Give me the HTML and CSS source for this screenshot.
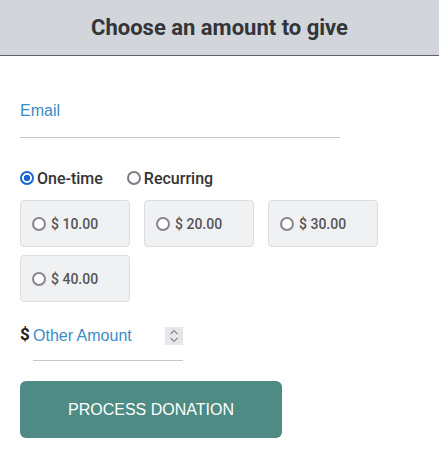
FILE: index.html
```html
<!DOCTYPE html>
<html lang="en">
<head>
    <meta charset="UTF-8">
    <title>Donate</title>
    <link rel="stylesheet" href="styles.css">
</head>
<body>
    <div class="donate-header">
        <h1>Choose an amount to give</h1>
    </div>

    <form class="donate-form">
        <div class="email-field">
            <input type="email" placeholder="Email">
        </div>

        <div class="frequency">
            <label class="freq-item"><input type="radio" name="freq" checked> One-time</label>
            <label class="freq-item"><input type="radio" name="freq"> Recurring</label>
        </div>

        <div class="amounts">
            <label class="amount-box"><input type="radio" name="amount"> $ 10.00</label>
            <label class="amount-box"><input type="radio" name="amount"> $ 20.00</label>
            <label class="amount-box"><input type="radio" name="amount"> $ 30.00</label>
            <label class="amount-box"><input type="radio" name="amount"> $ 40.00</label>
        </div>

        <div class="other-amount">
            <span class="dollar">$</span>
            <div class="other-field">
                <input type="text" placeholder="Other Amount">
                <span class="spinner">
                    <svg width="12" height="16" viewBox="0 0 12 16">
                        <path d="M2.5 6 L6 2.5 L9.5 6" fill="none" stroke="#8a8a92" stroke-width="1.2"/>
                        <path d="M2.5 10 L6 13.5 L9.5 10" fill="none" stroke="#8a8a92" stroke-width="1.2"/>
                    </svg>
                </span>
            </div>
        </div>

        <button type="button" class="donate-btn">PROCESS DONATION</button>
    </form>
</body>
</html>
```

FILE: styles.css
```css
* {
    margin: 0;
    padding: 0;
    box-sizing: border-box;
}

body {
    background: #fff;
    font-family: Roboto, sans-serif;
    color: #333;
}

.donate-header {
    background: #d2d6da;
    height: 56px;
    border-bottom: 1px solid #5f6166;
    display: flex;
    align-items: center;
    justify-content: center;
}

.donate-header h1 {
    font-size: 22px;
    font-weight: 700;
    color: #333539;
}

.donate-form {
    padding: 32px 20px 0 20px;
}

.email-field input {
    width: 320px;
    height: 50px;
    border: none;
    border-bottom: 1px solid #c8c8c8;
    padding: 10px 0 14px 0;
    font-family: "Liberation Sans", Arial, sans-serif;
    font-size: 16px;
    outline: none;
}

.email-field input::placeholder,
.other-field input::placeholder {
    color: #3a8cc6;
}

/* custom radio circles */
input[type="radio"] {
    appearance: none;
    width: 14px;
    height: 14px;
    margin: 0;
    border: 2px solid #7c7c84;
    border-radius: 50%;
    background: #fff;
    flex-shrink: 0;
}

input[type="radio"]:checked {
    border-color: #1a66d6;
    background: radial-gradient(circle, #1a66d6 0 3px, #fff 3.5px);
}

.frequency {
    display: flex;
    gap: 24px;
    margin-top: 28px;
    height: 24px;
    align-items: center;
}

.freq-item {
    display: flex;
    align-items: center;
    gap: 3px;
    font-size: 16px;
    font-weight: 500;
    color: #333;
}

.amounts {
    display: grid;
    grid-template-columns: repeat(3, 110px);
    column-gap: 14px;
    row-gap: 8px;
    margin-top: 10px;
}

.amount-box {
    height: 47px;
    background: #f0f1f3;
    border: 1px solid #dcdde0;
    border-radius: 4px;
    display: flex;
    align-items: center;
    gap: 5px;
    padding-left: 11px;
    font-size: 14px;
    font-weight: 500;
    color: #555;
}

.amount-box input[type="radio"] {
    border-color: #86868e;
}

.other-amount {
    display: flex;
    align-items: flex-end;
    margin-top: 18px;
}

.dollar {
    font-size: 17px;
    font-weight: 700;
    color: #222;
    width: 13px;
    padding-bottom: 17px;
}

.other-field {
    display: flex;
    align-items: center;
    width: 150px;
    height: 41px;
    border-bottom: 1px solid #c8c8c8;
    padding-bottom: 9px;
}

.other-field input {
    flex: 1;
    min-width: 0;
    border: none;
    outline: none;
    font-family: "Liberation Sans", Arial, sans-serif;
    font-size: 16px;
    background: transparent;
}

.spinner {
    width: 18px;
    height: 18px;
    background: #e7e7eb;
    display: flex;
    align-items: center;
    justify-content: center;
}

.donate-btn {
    margin-top: 20px;
    width: 262px;
    height: 57px;
    background: #4e8b84;
    border: none;
    border-radius: 6px;
    color: #fff;
    font-family: "Liberation Sans", Arial, sans-serif;
    font-size: 16px;
}
```
